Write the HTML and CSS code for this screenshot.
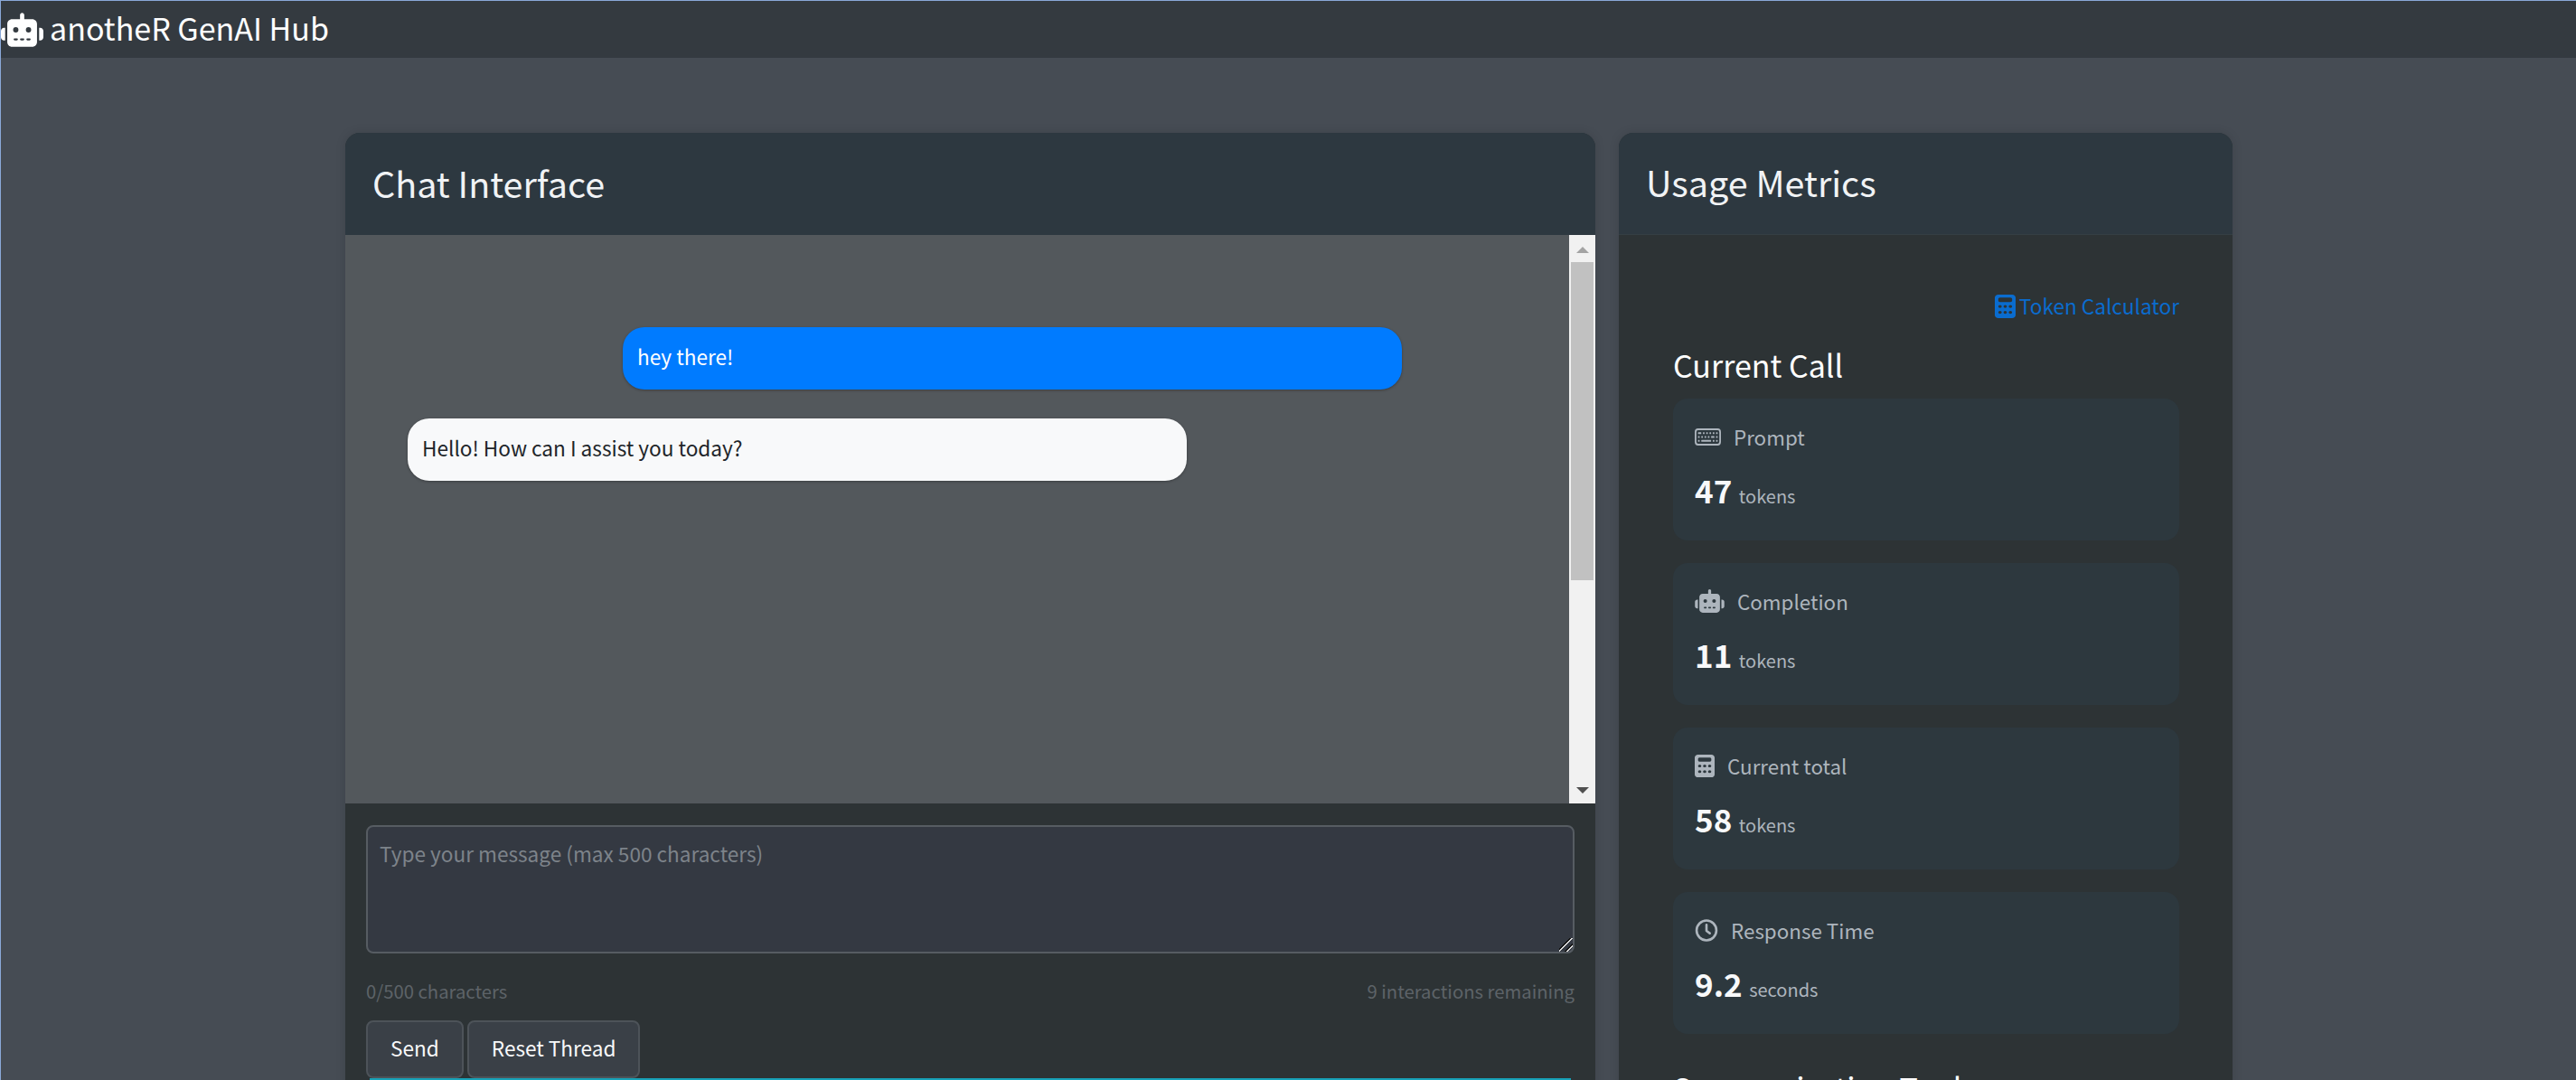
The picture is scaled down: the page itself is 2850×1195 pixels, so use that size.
FILE: index.html
```html
<!DOCTYPE html>
<html>
<head>
	<meta charset="UTF-8">
	<title>anotheR GenAI Hub</title>
	<link rel="stylesheet" href="styles.css">
</head>

<body>
<nav class="topbar">
	<svg class="brand-icon" viewBox="0 0 640 512"><path fill="currentColor" d="M320 0c17.7 0 32 14.3 32 32v64h120c39.8 0 72 32.2 72 72v272c0 39.8-32.2 72-72 72H168c-39.8 0-72-32.2-72-72V168c0-39.8 32.2-72 72-72h120V32c0-17.700 14.300-32 32-32zM208 384c-8.800 0-16 7.200-16 16s7.200 16 16 16h32c8.800 0 16-7.200 16-16s-7.200-16-16-16h-32zm96 0c-8.800 0-16 7.200-16 16s7.200 16 16 16h32c8.800 0 16-7.200 16-16s-7.200-16-16-16h-32zm96 0c-8.800 0-16 7.200-16 16s7.200 16 16 16h32c8.800 0 16-7.200 16-16s-7.200-16-16-16h-32zM264 256a40 40 0 1 0-80 0 40 40 0 1 0 80 0zm152 40a40 40 0 1 0 0-80 40 40 0 1 0 0 80zM48 224h16v192H48c-26.500 0-48-21.500-48-48v-96c0-26.500 21.500-48 48-48zm544 0c26.500 0 48 21.500 48 48v96c0 26.500-21.500 48-48 48h-16V224h16z"/></svg>
	<span class="brand-name">anotheR GenAI Hub</span>
</nav>

<main class="page">
	<section class="card chat-card">
		<header class="card-head"><h2>Chat Interface</h2></header>
		<div class="chat-window">
			<div class="messages">
				<div class="bubble bubble-user"><span>hey there!</span></div>
				<div class="bubble bubble-bot"><span>Hello! How can I assist you today?</span></div>
			</div>
			<div class="scrollbar">
				<div class="arrow arrow-up"></div>
				<div class="thumb"></div>
				<div class="arrow arrow-down"></div>
			</div>
		</div>
		<div class="composer">
			<textarea class="message-input" placeholder="Type your message (max 500 characters)"></textarea>
			<div class="counts">
				<span>0/500 characters</span>
				<span>9 interactions remaining</span>
			</div>
			<div class="actions">
				<button class="btn btn-send">Send</button>
				<button class="btn btn-reset">Reset Thread</button>
			</div>
			<div class="teal-line"></div>
		</div>
	</section>

	<aside class="card metrics-card">
		<header class="card-head card-head-line"><h2>Usage Metrics</h2></header>
		<div class="metrics-body">
			<a class="calc-link" href="#">
				<svg class="calc-icon" viewBox="0 0 384 512" preserveAspectRatio="none"><path fill="currentColor" d="M64 0C28.700 0 0 28.700 0 64v384c0 35.300 28.700 64 64 64h256c35.300 0 64-28.700 64-64V64c0-35.300-28.700-64-64-64H64zm32 64h192c17.700 0 32 14.300 32 32v32c0 17.700-14.300 32-32 32H96c-17.700 0-32-14.300-32-32V96c0-17.700 14.300-32 32-32zm0 160a32 32 0 1 1 0 64 32 32 0 1 1 0-64zm96 0a32 32 0 1 1 0 64 32 32 0 1 1 0-64zm64 32a32 32 0 1 1 64 0 32 32 0 1 1-64 0zM96 352a32 32 0 1 1 0 64 32 32 0 1 1 0-64zm64 32a32 32 0 1 1 64 0 32 32 0 1 1-64 0zm128-32a32 32 0 1 1 0 64 32 32 0 1 1 0-64z"/></svg>
				Token Calculator
			</a>
			<h3 class="section-title">Current Call</h3>

			<div class="metric">
				<div class="metric-label">
					<svg class="metric-icon icon-keyboard" viewBox="0 4 16 9" preserveAspectRatio="none"><path fill="currentColor" d="M14 5a1 1 0 0 1 1 1v5a1 1 0 0 1-1 1H2a1 1 0 0 1-1-1V6a1 1 0 0 1 1-1h12zM2 4a2 2 0 0 0-2 2v5a2 2 0 0 0 2 2h12a2 2 0 0 0 2-2V6a2 2 0 0 0-2-2H2z"/><path fill="currentColor" d="M13 10.250a.250.250 0 0 1 .250-.250h.500a.250.250 0 0 1 .250.250v.500a.250.250 0 0 1-.250.250h-.500a.250.250 0 0 1-.250-.250v-.500zm0-2a.250.250 0 0 1 .250-.250h.500a.250.250 0 0 1 .250.250v.500a.250.250 0 0 1-.250.250h-.500a.250.250 0 0 1-.250-.250v-.500zm-5 0A.250.250 0 0 1 8.250 8h.500a.250.250 0 0 1 .250.250v.500a.250.250 0 0 1-.250.250h-.500A.250.250 0 0 1 8 8.750v-.500zm2 0a.250.250 0 0 1 .250-.250h1.500a.250.250 0 0 1 .250.250v.500a.250.250 0 0 1-.250.250h-1.500a.250.250 0 0 1-.250-.250v-.500zm1 2a.250.250 0 0 1 .250-.250h.500a.250.250 0 0 1 .250.250v.500a.250.250 0 0 1-.250.250h-.500a.250.250 0 0 1-.250-.250v-.500zm-5-2A.250.250 0 0 1 6.250 8h.500a.250.250 0 0 1 .250.250v.500a.250.250 0 0 1-.250.250h-.500A.250.250 0 0 1 6 8.750v-.500zm-2 0A.250.250 0 0 1 4.250 8h.500a.250.250 0 0 1 .250.250v.500a.250.250 0 0 1-.250.250h-.500A.250.250 0 0 1 4 8.750v-.500zm-2 0A.250.250 0 0 1 2.250 8h.500a.250.250 0 0 1 .250.250v.500a.250.250 0 0 1-.250.250h-.500A.250.250 0 0 1 2 8.750v-.500zm11-2a.250.250 0 0 1 .250-.250h.500a.250.250 0 0 1 .250.250v.500a.250.250 0 0 1-.250.250h-.500a.250.250 0 0 1-.250-.250v-.500zm-2 0a.250.250 0 0 1 .250-.250h.500a.250.250 0 0 1 .250.250v.500a.250.250 0 0 1-.250.250h-.500a.250.250 0 0 1-.250-.250v-.500zm-2 0A.250.250 0 0 1 9.250 6h.500a.250.250 0 0 1 .250.250v.500a.250.250 0 0 1-.250.250h-.500A.250.250 0 0 1 9 6.750v-.500zm-2 0A.250.250 0 0 1 7.250 6h.500a.250.250 0 0 1 .250.250v.500a.250.250 0 0 1-.250.250h-.500A.250.250 0 0 1 7 6.750v-.500zm-2 0A.250.250 0 0 1 5.250 6h.500a.250.250 0 0 1 .250.250v.500a.250.250 0 0 1-.250.250h-.500A.250.250 0 0 1 5 6.750v-.500zm-3 0A.250.250 0 0 1 2.250 6h1.500a.250.250 0 0 1 .250.250v.500a.250.250 0 0 1-.250.250h-1.500A.250.250 0 0 1 2 6.750v-.500zm0 4a.250.250 0 0 1 .250-.250h.500a.250.250 0 0 1 .250.250v.500a.250.250 0 0 1-.250.250h-.500a.250.250 0 0 1-.250-.250v-.500zm2 0a.250.250 0 0 1 .250-.250h5.500a.250.250 0 0 1 .250.250v.500a.250.250 0 0 1-.250.250h-5.500a.250.250 0 0 1-.250-.250v-.500z"/></svg>
					Prompt
				</div>
				<div class="metric-value"><strong>47</strong> <span>tokens</span></div>
			</div>

			<div class="metric">
				<div class="metric-label">
					<svg class="metric-icon icon-robot" viewBox="0 0 640 512"><path fill="currentColor" d="M320 0c17.700 0 32 14.300 32 32v64h120c39.800 0 72 32.200 72 72v272c0 39.800-32.200 72-72 72H168c-39.800 0-72-32.200-72-72V168c0-39.800 32.200-72 72-72h120V32c0-17.700 14.300-32 32-32zM208 384c-8.800 0-16 7.200-16 16s7.200 16 16 16h32c8.800 0 16-7.200 16-16s-7.200-16-16-16h-32zm96 0c-8.800 0-16 7.200-16 16s7.200 16 16 16h32c8.800 0 16-7.200 16-16s-7.200-16-16-16h-32zm96 0c-8.800 0-16 7.200-16 16s7.200 16 16 16h32c8.800 0 16-7.200 16-16s-7.200-16-16-16h-32zM264 256a40 40 0 1 0-80 0 40 40 0 1 0 80 0zm152 40a40 40 0 1 0 0-80 40 40 0 1 0 0 80zM48 224h16v192H48c-26.500 0-48-21.500-48-48v-96c0-26.500 21.500-48 48-48zm544 0c26.500 0 48 21.500 48 48v96c0 26.500-21.500 48-48 48h-16V224h16z"/></svg>
					Completion
				</div>
				<div class="metric-value"><strong>11</strong> <span>tokens</span></div>
			</div>

			<div class="metric">
				<div class="metric-label">
					<svg class="metric-icon icon-calc" viewBox="0 0 384 512" preserveAspectRatio="none"><path fill="currentColor" d="M64 0C28.700 0 0 28.700 0 64v384c0 35.300 28.700 64 64 64h256c35.300 0 64-28.700 64-64V64c0-35.300-28.700-64-64-64H64zm32 64h192c17.700 0 32 14.300 32 32v32c0 17.700-14.300 32-32 32H96c-17.700 0-32-14.300-32-32V96c0-17.700 14.300-32 32-32zm0 160a32 32 0 1 1 0 64 32 32 0 1 1 0-64zm96 0a32 32 0 1 1 0 64 32 32 0 1 1 0-64zm64 32a32 32 0 1 1 64 0 32 32 0 1 1-64 0zM96 352a32 32 0 1 1 0 64 32 32 0 1 1 0-64zm64 32a32 32 0 1 1 64 0 32 32 0 1 1-64 0zm128-32a32 32 0 1 1 0 64 32 32 0 1 1 0-64z"/></svg>
					Current total
				</div>
				<div class="metric-value"><strong>58</strong> <span>tokens</span></div>
			</div>

			<div class="metric">
				<div class="metric-label">
					<svg class="metric-icon icon-clock" viewBox="0 0 24 24"><circle cx="12" cy="12" r="10.500" fill="none" stroke="currentColor" stroke-width="2.500"/><path fill="none" stroke="currentColor" stroke-width="2.500" stroke-linecap="round" stroke-linejoin="round" d="M12 6v6.500l3.500 2.500"/></svg>
					Response Time
				</div>
				<div class="metric-value"><strong>9.2</strong> <span>seconds</span></div>
			</div>

			<h3 class="section-title section-next">Summarization Tools</h3>
		</div>
	</aside>
</main>
</body>
</html>
```

FILE: styles.css
```css
* {
	box-sizing: border-box;
}
html, body {
	height: 100%;
}
body {
	margin: 0;
	overflow: hidden;
	background-color: #464c54;
	border-top: 1px solid #8aa8d8;
	border-left: 1px solid #8aa8d8;
	font-family: "Noto Sans CJK SC", "Liberation Sans", sans-serif;
	color: #f8f9fa;
}

/* top bar */
.topbar {
	height: 63px;
	display: flex;
	align-items: center;
	background-color: #343a40;
	color: #fff;
}
.brand-icon {
	width: 47px;
	height: 38px;
	margin-right: 7px;
}
.brand-name {
	font-size: 34px;
	line-height: 44px;
	padding-bottom: 4px;
}

/* columns */
.page {
	display: flex;
	align-items: flex-start;
	gap: 26px;
	padding: 83px 0 0 381px;
}
.card {
	border-radius: 16px 16px 0 0;
	background-color: #2d3335;
	box-shadow: 0 0 12px rgba(0, 0, 0, 0.12);
	overflow: hidden;
}
.chat-card {
	width: 1383px;
}
.metrics-card {
	width: 679px;
}
.card-head {
	height: 113px;
	display: flex;
	align-items: center;
	padding: 0 30px;
	background-color: #2d3840;
}
.card-head-line {
	border-bottom: 1px solid #353f44;
}
.card-head h2 {
	margin: 0;
	padding-bottom: 4px;
	font-size: 39.5px;
	font-weight: 400;
	line-height: 50px;
	color: #f1f3f5;
}

/* chat */
.chat-window {
	height: 629px;
	display: flex;
	background-color: #53585c;
}
.messages {
	flex: 1;
	display: flex;
	flex-direction: column;
	gap: 32px;
	padding: 102px 0 0 69px;
}
.bubble {
	width: 862px;
	height: 69px;
	padding: 0 16px 5px;
	display: flex;
	align-items: center;
	border-radius: 24px;
	font-size: 22.6px;
	box-shadow: 0 1px 3px rgba(0, 0, 0, 0.3);
}
.bubble-user {
	margin-left: 238px;
	background-color: #007bff;
	color: #fff;
}
.bubble-bot {
	background-color: #f8f9fa;
	color: #212529;
}
.scrollbar {
	width: 29px;
	display: flex;
	flex-direction: column;
	align-items: center;
	background-color: #f1f1f1;
}
.thumb {
	width: 25px;
	height: 352px;
	background-color: #c1c1c1;
}
.arrow {
	width: 0;
	height: 0;
	border-left: 7px solid transparent;
	border-right: 7px solid transparent;
}
.arrow-up {
	margin: 13px 0 10px;
	border-bottom: 7px solid #a3a3a3;
}
.arrow-down {
	margin-top: auto;
	margin-bottom: 11px;
	border-top: 7px solid #505050;
}

/* composer */
.composer {
	padding: 24px 23px 0;
	height: 330px;
}
.message-input {
	display: block;
	width: 100%;
	height: 142px;
	padding: 15px 13px;
	border: 2px solid #565c62;
	border-radius: 8px;
	background-color: #343942;
	color: #fff;
	font-family: inherit;
	font-size: 22.6px;
	line-height: 30px;
	outline: none;
}
.message-input::placeholder {
	color: #7d838a;
}
.message-input::-webkit-resizer {
	background: linear-gradient(135deg, transparent 38%, #111 38%, #111 45%, #ddd 45%, #ddd 52%, transparent 52%, transparent 68%, #111 68%, #111 75%, #ddd 75%, #ddd 82%, transparent 82%);
}
.counts {
	display: flex;
	justify-content: space-between;
	margin-top: 26px;
	font-size: 20.3px;
	line-height: 30px;
	color: #5d6368;
}
.actions {
	display: flex;
	gap: 4px;
	margin-top: 18px;
}
.btn {
	height: 64px;
	padding: 0 25px 3px;
	border: 2px solid #4d5359;
	border-radius: 8px;
	background-color: #3a4047;
	color: #f8f9fa;
	font-family: inherit;
	font-size: 22.6px;
}
.teal-line {
	height: 3px;
	margin: 0 4px;
	background-color: #17a2b8;
}

/* metrics */
.metrics-body {
	padding: 64px 59px 0 60px;
}
.calc-link {
	display: flex;
	align-items: center;
	justify-content: flex-end;
	gap: 4px;
	font-size: 22.6px;
	line-height: 30px;
	color: #0a6ccf;
	text-decoration: none;
}
.calc-icon {
	width: 23px;
	height: 26px;
}
.section-title {
	margin: 28px 0 15px;
	font-size: 34px;
	font-weight: 400;
	line-height: 44px;
	color: #fff;
}
.section-next {
	margin-top: 38px;
}
.metric {
	height: 157px;
	margin-bottom: 25px;
	padding: 26px 24px 0;
	border-radius: 16px;
	background-color: #2d383e;
}
.metric-label {
	display: flex;
	align-items: center;
	gap: 14px;
	height: 32px;
	font-size: 22.4px;
	color: #adb5bd;
}
.metric-icon {
	color: #adb5bd;
}
.icon-keyboard {
	width: 29px;
	height: 19px;
}
.icon-robot {
	width: 33px;
	height: 26px;
}
.icon-calc {
	width: 22px;
	height: 25px;
}
.icon-clock {
	width: 26px;
	height: 25px;
}
.metric-value {
	margin-top: 21px;
	line-height: 44px;
	font-size: 20px;
	color: #adb5bd;
}
.metric-value strong {
	font-size: 35px;
	font-weight: 700;
	color: #f8f9fa;
}
.metric-value span {
	margin-left: 3px;
}
```
